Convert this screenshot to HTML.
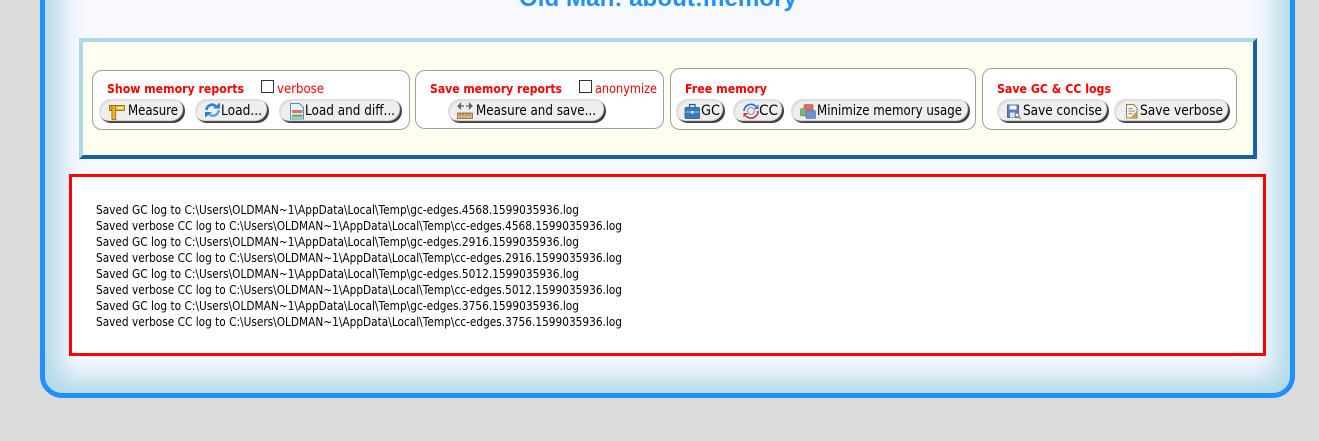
<!DOCTYPE html>
<html><head><meta charset="utf-8"><style>
html,body{margin:0;padding:0;width:1319px;height:441px;overflow:hidden;background:#dcdcdc}
div{position:absolute;box-sizing:border-box}
#outer{left:40px;top:-100px;width:1255px;height:498px;background:#f8f8ff;border:5px solid #1e90ff;border-radius:22px;box-shadow:inset 0 0 26px 14px #add8e6}
#tool{left:79px;top:38px;width:1178px;height:121px;background:#fffff0;border:4px solid;border-color:#add8e6 #1560a8 #1560a8 #add8e6}
.fs{background:#fff;border:1px solid #a0a0a0;border-radius:10px}
.b{height:24px;top:99px;background:#eee;border-radius:12px;box-shadow:inset -2px -2px 1px #3c3c3c,inset 2px 2px 1px #ddd}
.c{width:13px;height:13px;top:80px;background:#fff;border:1px solid #333}
#log{left:69px;top:174px;width:1197px;height:182px;background:#fff;border:3px solid #f00}
svg{position:absolute;left:0;top:0}
text{font-family:"DejaVu Sans",sans-serif;white-space:pre}
.l{font-size:12px;fill:#000}
.h{font-size:12.5px;font-weight:bold;fill:#f00}
.r{font-size:13px;fill:#f00}
.t{font-size:14.5px;fill:#000}
</style></head><body>
<div id="outer"></div>
<div id="tool"></div>
<div class="fs" style="left:92px;top:70px;width:318px;height:60px"></div>
<div class="fs" style="left:415px;top:70px;width:249px;height:59px"></div>
<div class="fs" style="left:670px;top:68px;width:306px;height:62px"></div>
<div class="fs" style="left:982px;top:68px;width:255px;height:62px"></div>
<div class="c" style="left:261px"></div>
<div class="c" style="left:579px"></div>
<div class="b" style="left:99px;width:86px"></div>
<div class="b" style="left:195px;width:74px"></div>
<div class="b" style="left:279px;width:123px"></div>
<div class="b" style="left:448px;width:158px"></div>
<div class="b" style="left:676px;width:49px"></div>
<div class="b" style="left:733px;width:51px"></div>
<div class="b" style="left:791px;width:179px"></div>
<div class="b" style="left:997px;width:112px"></div>
<div class="b" style="left:1114px;width:116px"></div>
<div id="log"></div>
<svg width="1319" height="441" viewBox="0 0 1319 441">
<text x="519" y="6" textLength="278" lengthAdjust="spacingAndGlyphs" style="font-family:'Liberation Sans',sans-serif;font-size:24px;font-weight:bold;fill:#1e90ff">Old Man: about:memory</text>

<text class="h" x="107" y="93" textLength="137" lengthAdjust="spacingAndGlyphs">Show memory reports</text>
<text class="r" x="277" y="93" textLength="47" lengthAdjust="spacingAndGlyphs">verbose</text>
<text class="h" x="430" y="93" textLength="132" lengthAdjust="spacingAndGlyphs">Save memory reports</text>
<text class="r" x="595" y="93" textLength="62" lengthAdjust="spacingAndGlyphs">anonymize</text>
<text class="h" x="685" y="93" textLength="82" lengthAdjust="spacingAndGlyphs">Free memory</text>
<text class="h" x="997" y="93" textLength="114" lengthAdjust="spacingAndGlyphs">Save GC &amp; CC logs</text>

<text class="t" x="128" y="115" textLength="50" lengthAdjust="spacingAndGlyphs">Measure</text>
<text class="t" x="221" y="115" textLength="41" lengthAdjust="spacingAndGlyphs">Load...</text>
<text class="t" x="305" y="115" textLength="90" lengthAdjust="spacingAndGlyphs">Load and diff...</text>
<text class="t" x="476" y="115" textLength="120" lengthAdjust="spacingAndGlyphs">Measure and save...</text>
<text class="t" x="701" y="115" textLength="19" lengthAdjust="spacingAndGlyphs">GC</text>
<text class="t" x="759" y="115" textLength="19" lengthAdjust="spacingAndGlyphs">CC</text>
<text class="t" x="817" y="115" textLength="145" lengthAdjust="spacingAndGlyphs">Minimize memory usage</text>
<text class="t" x="1023" y="115" textLength="79" lengthAdjust="spacingAndGlyphs">Save concise</text>
<text class="t" x="1140" y="115" textLength="83" lengthAdjust="spacingAndGlyphs">Save verbose</text>

<text class="l" x="96" y="214" textLength="483" lengthAdjust="spacingAndGlyphs">Saved GC log to C:\Users\OLDMAN~1\AppData\Local\Temp\gc-edges.4568.1599035936.log</text>
<text class="l" x="96" y="230" textLength="526" lengthAdjust="spacingAndGlyphs">Saved verbose CC log to C:\Users\OLDMAN~1\AppData\Local\Temp\cc-edges.4568.1599035936.log</text>
<text class="l" x="96" y="246" textLength="483" lengthAdjust="spacingAndGlyphs">Saved GC log to C:\Users\OLDMAN~1\AppData\Local\Temp\gc-edges.2916.1599035936.log</text>
<text class="l" x="96" y="262" textLength="526" lengthAdjust="spacingAndGlyphs">Saved verbose CC log to C:\Users\OLDMAN~1\AppData\Local\Temp\cc-edges.2916.1599035936.log</text>
<text class="l" x="96" y="278" textLength="483" lengthAdjust="spacingAndGlyphs">Saved GC log to C:\Users\OLDMAN~1\AppData\Local\Temp\gc-edges.5012.1599035936.log</text>
<text class="l" x="96" y="294" textLength="526" lengthAdjust="spacingAndGlyphs">Saved verbose CC log to C:\Users\OLDMAN~1\AppData\Local\Temp\cc-edges.5012.1599035936.log</text>
<text class="l" x="96" y="310" textLength="483" lengthAdjust="spacingAndGlyphs">Saved GC log to C:\Users\OLDMAN~1\AppData\Local\Temp\gc-edges.3756.1599035936.log</text>
<text class="l" x="96" y="326" textLength="526" lengthAdjust="spacingAndGlyphs">Saved verbose CC log to C:\Users\OLDMAN~1\AppData\Local\Temp\cc-edges.3756.1599035936.log</text>

<!-- Measure: T ruler, stem on the left -->
<g stroke="#8a6500" stroke-width=".8" fill="#f0b820">
<rect x="109.400" y="105.400" width="15" height="5"/>
<rect x="111.900" y="105.400" width="3.800" height="14"/>
</g>
<path d="M116.500 107.800h7" stroke="#fff6c8" stroke-width="1.500"/>

<!-- Load: blue refresh -->
<g fill="none" stroke-width="2.600">
<path d="M206.500 110a5.500 5.500 0 0 1 9.500-3.500" stroke="#2f7fd6"/>
<path d="M218.500 110a5.500 5.500 0 0 1-9.500 4" stroke="#58a8e4"/>
</g>
<path d="M213 108.500h7v-6z" fill="#2f7fd6"/>
<path d="M212 112h-7v5.500z" fill="#2f7fd6"/>

<!-- Load and diff: document -->
<path d="M290.500 103.500h9l4 4v11.500h-13z" fill="#e8f2fc" stroke="#4a8fd0"/>
<rect x="292" y="110" width="10.500" height="3" fill="#e86a6a"/>
<rect x="292" y="113" width="10.500" height="1.500" fill="#f4f0d8"/>
<rect x="292" y="114.500" width="10.500" height="3" fill="#68b868"/>

<!-- Measure and save -->
<path d="M464 106h-6M458 106l2.500-2.500v5zM466 106h6M472 106l-2.500-2.500v5z" stroke="#666" stroke-width="1.200" fill="#666"/>
<rect x="457.500" y="113" width="15" height="5.500" fill="#d8b078" stroke="#8a6a3a" stroke-width=".8"/>
<path d="M460 113v2.500M463 113v2.500M466 113v2.500M469 113v2.500" stroke="#6a4a20" stroke-width=".7"/>

<!-- GC: briefcase -->
<rect x="685" y="107.500" width="14.500" height="11" rx="1" fill="#3a7ab8" stroke="#1f5488" stroke-width=".8"/>
<path d="M689.500 107.500v-3h5.500v3" fill="none" stroke="#1f5488" stroke-width="1.200"/>
<path d="M685 112h14.500" stroke="#8fc0ea" stroke-width="1"/>
<rect x="691" y="111" width="2.500" height="2.500" fill="#dbe9f6"/>

<!-- CC: refresh blue/red -->
<g fill="none" stroke-width="1.700">
<path d="M744 111a7 7 0 0 1 12-4.500" stroke="#2f6fd0"/>
<path d="M758 111a7 7 0 0 1-12 5" stroke="#d03030"/>
<circle cx="751" cy="111" r="3.500" stroke="#8a8ad0" stroke-width="1"/>
</g>
<path d="M754 109l4.500 0v-4.500z" fill="#2f6fd0"/>
<path d="M748 113l-4.500 0v4.500z" fill="#d03030"/>

<!-- Minimize: cubes -->
<rect x="804" y="104.500" width="9" height="8" rx="1" fill="#e46a6a" stroke="#b84545" stroke-width=".6"/>
<rect x="800.500" y="108.500" width="6" height="7.500" rx="1" fill="#7fb56f" stroke="#5a8a50" stroke-width=".6"/>
<rect x="806" y="110.500" width="9.500" height="8" rx="1" fill="#6a94cc" stroke="#4670a8" stroke-width=".6"/>

<!-- Save concise: floppy + magnifier -->
<rect x="1007.500" y="105" width="11" height="12.500" fill="#5f7fc0" stroke="#3a5590" stroke-width=".8"/>
<rect x="1009.500" y="105.500" width="7" height="4" fill="#fff"/>
<rect x="1010" y="112.500" width="5" height="5" fill="#dfe6f4"/>
<circle cx="1017" cy="115" r="2" fill="#fff" stroke="#5a6fa0" stroke-width="1"/>
<path d="M1018.500 116.500l2.500 2.500" stroke="#c89030" stroke-width="1.400"/>

<!-- Save verbose: doc -->
<path d="M1126.500 104.500h7l3.500 3.500v10h-10.500z" fill="#f8f4e4" stroke="#a08040" stroke-width="1"/>
<path d="M1128.500 108.500h4M1128.500 111h6.500M1128.500 113.500h4" stroke="#7d8fa8" stroke-width="1"/>
<path d="M1136.500 111.500v6.500h-6.500z" fill="#c8a050"/>
</svg>
</body></html>
